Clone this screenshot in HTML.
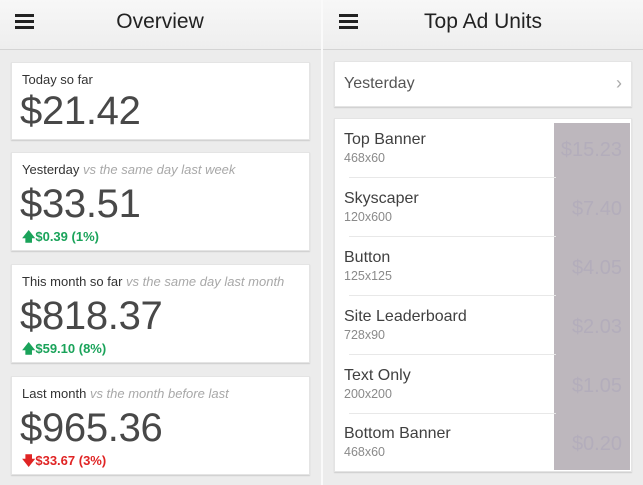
<!DOCTYPE html>
<html><head><meta charset="utf-8"><style>
*{margin:0;padding:0;box-sizing:border-box}
body{width:643px;height:485px;overflow:hidden;background:#ececec;font-family:"Liberation Sans",sans-serif;position:relative}
.a{position:absolute}
.hdr{top:0;height:50px;background:linear-gradient(#f7f7f7,#eeeeee);border-bottom:1px solid #d4d4d4}
.ham{width:19px;height:15px;border-top:3px solid #222;border-bottom:3px solid #222}
.ham:after{content:"";position:absolute;left:0;right:0;top:3px;height:3px;background:#222}
.title{font-size:21px;color:#222;text-align:center}
.card{background:#fff;box-shadow:0 1px 1px #ccc;border:1px solid #e4e4e4}
.lbl{font-size:13px;color:#333;left:10px}
.lbl i{color:#a8a8a8}
.big{font-size:40px;color:#484848;left:8px;letter-spacing:-0.3px}
.chg{font-size:13px;font-weight:bold;left:10px}
.g{color:#1aa35a}.r{color:#e02424}
.nm{font-size:16px;color:#404040;left:9px}
.sz{font-size:12.5px;color:#8a8a8a;left:9px}
.dv{left:14px;width:207px;height:1px;background:#e8e8e8}
.val{font-size:20px;color:#b3adbb;right:9px}
</style></head><body>
<div class="a hdr" style="left:0;width:321px"></div>
<div class="a hdr" style="left:323px;width:320px"></div>
<div class="a" style="left:321px;top:0;width:2px;height:485px;background:#fafafa"></div>
<div class="a ham" style="left:15px;top:14px"></div>
<div class="a ham" style="left:339px;top:14px"></div>
<div class="a title" style="left:0;width:320px;top:10px">Overview</div>
<div class="a title" style="left:323px;width:320px;top:10px">Top Ad Units</div>

<div class="a card" style="left:11px;top:62px;width:299px;height:78px">
<div class="a lbl" style="top:9px">Today so far</div>
<div class="a big" style="top:26px">$21.42</div></div>

<div class="a card" style="left:11px;top:152px;width:299px;height:99px">
<div class="a lbl" style="top:9px">Yesterday <i>vs the same day last week</i></div>
<div class="a big" style="top:29px">$33.51</div>
<div class="a chg g" style="top:75px">&#129093;$0.39 (1%)</div></div>

<div class="a card" style="left:11px;top:264px;width:299px;height:99px">
<div class="a lbl" style="top:9px">This month so far <i>vs the same day last month</i></div>
<div class="a big" style="top:29px">$818.37</div>
<div class="a chg g" style="top:75px">&#129093;$59.10 (8%)</div></div>

<div class="a card" style="left:11px;top:376px;width:299px;height:99px">
<div class="a lbl" style="top:9px">Last month <i>vs the month before last</i></div>
<div class="a big" style="top:29px">$965.36</div>
<div class="a chg r" style="top:75px">&#129095;$33.67 (3%)</div></div>

<div class="a card" style="left:334px;top:61px;width:298px;height:46px">
<div class="a" style="left:9px;top:13px;font-size:16px;color:#555">Yesterday</div>
<div class="a" style="right:9px;top:11px;font-size:18px;color:#aaa">&#8250;</div></div>

<div class="a card" style="left:334px;top:118px;width:298px;height:354px">
<div class="a" style="left:219px;top:4px;width:76px;height:347px;background:#bdb7bd"></div>
<div class="a nm" style="top:12px">Top Banner</div><div class="a sz" style="top:32px">468x60</div>
<div class="a dv" style="top:58px"></div>
<div class="a nm" style="top:71px">Skyscaper</div><div class="a sz" style="top:91px">120x600</div>
<div class="a dv" style="top:117px"></div>
<div class="a nm" style="top:130px">Button</div><div class="a sz" style="top:150px">125x125</div>
<div class="a dv" style="top:176px"></div>
<div class="a nm" style="top:189px">Site Leaderboard</div><div class="a sz" style="top:209px">728x90</div>
<div class="a dv" style="top:235px"></div>
<div class="a nm" style="top:248px">Text Only</div><div class="a sz" style="top:268px">200x200</div>
<div class="a dv" style="top:294px"></div>
<div class="a nm" style="top:306px">Bottom Banner</div><div class="a sz" style="top:326px">468x60</div>
<div class="a val" style="top:20px">$15.23</div>
<div class="a val" style="top:79px">$7.40</div>
<div class="a val" style="top:138px">$4.05</div>
<div class="a val" style="top:197px">$2.03</div>
<div class="a val" style="top:256px">$1.05</div>
<div class="a val" style="top:314px">$0.20</div>
</div>
</body></html>
